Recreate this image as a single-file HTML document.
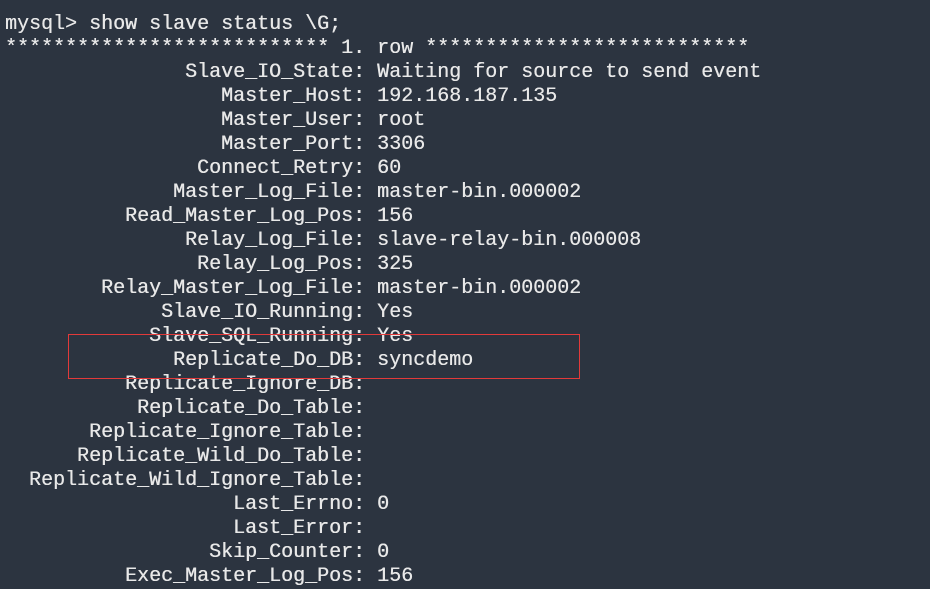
<!DOCTYPE html>
<html><head><meta charset="utf-8"><style>
html,body{margin:0;padding:0;}
body{width:930px;height:586px;overflow:hidden;background:#2c3440;position:relative;}
pre{margin:0;position:absolute;left:5px;top:13px;font-family:"Liberation Mono","DejaVu Sans Mono",monospace;font-size:20px;line-height:24px;color:#e8e8e8;text-shadow:0.3px 0 0 #e8e8e8;}
.box{position:absolute;left:68px;top:334px;width:510px;height:43px;border:1px solid #e23a3a;}
</style></head><body>
<pre>mysql&gt; show slave status \G;
*************************** 1. row ***************************
               Slave_IO_State: Waiting for source to send event
                  Master_Host: 192.168.187.135
                  Master_User: root
                  Master_Port: 3306
                Connect_Retry: 60
              Master_Log_File: master-bin.000002
          Read_Master_Log_Pos: 156
               Relay_Log_File: slave-relay-bin.000008
                Relay_Log_Pos: 325
        Relay_Master_Log_File: master-bin.000002
             Slave_IO_Running: Yes
            Slave_SQL_Running: Yes
              Replicate_Do_DB: syncdemo
          Replicate_Ignore_DB: 
           Replicate_Do_Table: 
       Replicate_Ignore_Table: 
      Replicate_Wild_Do_Table: 
  Replicate_Wild_Ignore_Table: 
                   Last_Errno: 0
                   Last_Error: 
                 Skip_Counter: 0
          Exec_Master_Log_Pos: 156</pre>
<div class="box"></div>
</body></html>
